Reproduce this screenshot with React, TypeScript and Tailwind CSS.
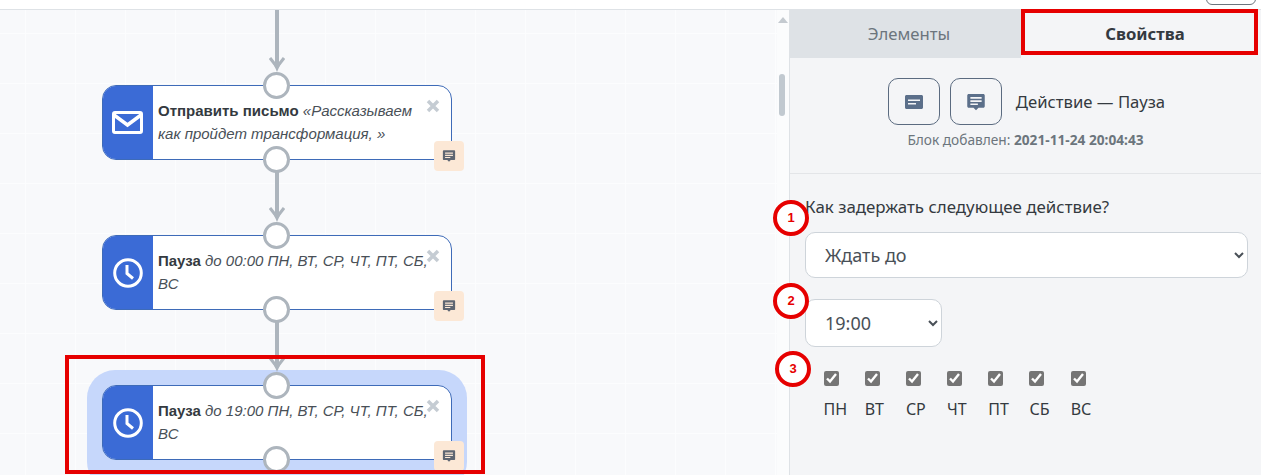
import React from "react";

const Msg = ({ className = "" }: { className?: string }) => (
  <svg viewBox="0 0 16 16" className={className} fill="currentColor">
    <path fillRule="evenodd" d="M2.2 1.500h11.600c.7 0 1.200.5 1.200 1.200v8.600c0 .7-.5 1.200-1.200 1.200H10l-2 2-2-2H2.200c-.7 0-1.200-.5-1.200-1.200V2.700c0-.7.5-1.200 1.200-1.200zM3.500 4v1.300h9V4zm0 2.600v1.300h9V6.600zm0 2.600v1.200h6V9.200z" />
  </svg>
);

const Card = ({ className = "" }: { className?: string }) => (
  <svg viewBox="0 0 18 14" className={className} fill="currentColor">
    <path fillRule="evenodd" d="M1.500 0h15c.8 0 1.500.7 1.500 1.500v11c0 .8-.7 1.500-1.500 1.500h-15C.7 14 0 13.300 0 12.500v-11C0 .7.7 0 1.500 0zM3 4.500V6h12V4.500zM3 8v1.500h8V8z" />
  </svg>
);

const Envelope = () => (
  <svg viewBox="0 0 31 23" className="w-[31px] h-[23px]">
    <rect x="1.500" y="1.500" width="28" height="20" rx="1.500" fill="none" stroke="#fff" strokeWidth="3" />
    <path d="M2 4l13.500 10L29 4" fill="none" stroke="#fff" strokeWidth="3.500" />
  </svg>
);

const Clock = () => (
  <svg viewBox="0 0 30 30" className="w-[30px] h-[30px]">
    <circle cx="15" cy="15" r="13.300" fill="none" stroke="#fff" strokeWidth="3" />
    <path d="M14 7v8.500l6 5" fill="none" stroke="#fff" strokeWidth="3" />
  </svg>
);

const Dot = ({ className }: { className: string }) => (
  <div className={`absolute w-[27px] h-[27px] rounded-full bg-white border-[3px] border-[#adb5bd] ${className}`} />
);

const Node = ({ pos, icon, title, rest }: { pos: string; icon: React.ReactNode; title: string; rest: string }) => (
  <div className={`absolute left-[102px] w-[350px] h-[75px] ${pos}`}>
    <div className="flex h-full rounded-[14px] border border-[#3e6bb8] bg-white overflow-hidden">
      <div className="w-[51px] -ml-px -my-px bg-[#3b6bd6] flex items-center justify-center shrink-0">{icon}</div>
      <div className="pl-[5px] pt-[13px] w-[283px] text-[15px] leading-[23px] text-[#495057] italic font-['Liberation_Sans',sans-serif]">
        <b className="not-italic font-bold text-[#343a40]">{title}</b> {rest}
      </div>
    </div>
    <Dot className="left-[161px] -top-[13px]" />
    <Dot className="left-[161px] top-[61px]" />
    <span className="absolute left-[324px] top-[14px] w-[14px] h-[14px]">
      <svg viewBox="0 0 14 14" className="w-[14px] h-[14px]">
        <path d="M2 2l10 10M12 2L2 12" stroke="#c5ccd3" strokeWidth="3.500" />
      </svg>
    </span>
    <div className="absolute left-[332px] top-[56px] w-[30px] h-[30px] rounded-[4px] bg-[#fce8d6] flex items-center justify-center text-[#5f6672]">
      <Msg className="w-[14px] h-[14px]" />
    </div>
  </div>
);

const Arrow = ({ pos, h }: { pos: string; h: string }) => (
  <div className={`absolute left-[267px] w-[19px] ${pos} ${h} flex flex-col items-center`}>
    <div className="w-[4px] flex-1 bg-[#adb5bd] -mb-[8px]" />
    <svg viewBox="0 0 16 15" className="w-[16px] h-[15px] shrink-0">
      <path d="M1 1l7 9 7-9" fill="none" stroke="#adb5bd" strokeWidth="3" />
      <path d="M4 6l4 9 4-9z" fill="#adb5bd" />
    </svg>
  </div>
);

const Badge = ({ pos, n }: { pos: string; n: string }) => (
  <div className={`absolute w-[36px] h-[36px] rounded-full bg-white border-[4px] border-[#e60000] flex items-center justify-center text-[13px] font-bold text-[#e60000] font-['Liberation_Sans',sans-serif] ${pos}`}>
    {n}
  </div>
);

const days = ["ПН", "ВТ", "СР", "ЧТ", "ПТ", "СБ", "ВС"];

export default function App() {
  return (
    <div className="relative w-[1261px] h-[475px] overflow-hidden bg-white font-['Noto_Sans',sans-serif]">
      <div className="h-[10px] border-b border-[#dee2e6] relative">
        <div className="absolute left-[1206px] -top-[12px] w-[50px] h-[17px] rounded-[6px] border border-[#6c757d]" />
      </div>
      <div className="flex h-[465px]">
        <div className="relative w-[777px] overflow-hidden bg-[#f8f9fb] bg-[linear-gradient(#fcfdfe_1px,transparent_1px),linear-gradient(90deg,#fcfdfe_1px,transparent_1px)] bg-[size:50px_50px] bg-[position:25px_23px]">
          <div className="absolute -top-[10px] left-0 w-[777px] h-[475px]">
            <Arrow pos="top-[10px]" h="h-[62px]" />
            <Arrow pos="top-[172px]" h="h-[50px]" />

            <div className="absolute left-[87px] top-[370px] w-[380px] h-[120px] rounded-[28px] bg-[#c6d7fb]" />
            <Arrow pos="top-[322px]" h="h-[50px]" />

            <Node pos="top-[85px]" icon={<Envelope />} title="Отправить письмо" rest="«Рассказываем как пройдет трансформация, »" />
            <Node pos="top-[235px]" icon={<Clock />} title="Пауза" rest="до 00:00 ПН, ВТ, СР, ЧТ, ПТ, СБ, ВС" />
            <Node pos="top-[385px]" icon={<Clock />} title="Пауза" rest="до 19:00 ПН, ВТ, СР, ЧТ, ПТ, СБ, ВС" />

            <div className="absolute left-[65px] top-[355px] w-[420px] h-[119px] border-[4px] border-[#e60000]" />
          </div>
        </div>

        <div className="relative w-[12px] bg-[#fbfcfd]">
          <div className="absolute left-[1px] top-[7px] w-0 h-0 border-x-[5px] border-x-transparent border-b-[6px] border-b-[#c4cad0]" />
          <div className="absolute left-[2px] top-[64px] w-[6px] h-[42px] rounded-[3px] bg-[#c1c9d0]" />
        </div>

        <div className="w-[472px] border-l border-[#dee2e6] bg-[#f4f5f7] relative">
          <div className="flex h-[48px] text-[16.700px]">
            <div className="w-[231px] bg-[#dee2e6] text-[#6c757d] flex items-center justify-center pl-[7px] pb-[1px]">Элементы</div>
            <div className="flex-1 text-[#343a40] font-bold flex items-center justify-center pl-[8px] pb-[1px]">Свойства</div>
          </div>
          <div className="h-[116px] border-b border-[#e3e5e8] flex flex-col items-center">
            <div className="flex items-center mt-[20px] pl-[2px]">
              <button className="w-[52px] h-[47px] rounded-[10px] border border-[#5b6b80] flex items-center justify-center text-[#5b6f8a]">
                <Card className="w-[18px] h-[14px]" />
              </button>
              <button className="w-[52px] h-[47px] ml-[10px] rounded-[10px] border border-[#5b6b80] flex items-center justify-center text-[#5b6f8a]">
                <Msg className="w-[20px] h-[20px]" />
              </button>
              <span className="ml-[14px] text-[16.700px] text-[#343a40]">Действие — Пауза</span>
            </div>
            <div className="mt-[5px] text-[13.700px] text-[#6c757d]">
              Блок добавлен: <b>2021-11-24 20:04:43</b>
            </div>
          </div>
          <div className="pl-[15px] pr-[13px] pt-[21px]">
            <label className="block text-[16.900px] leading-[24px] text-[#343a40]">Как задержать следующее действие?</label>
            <select className="block mt-[13px] w-full h-[46px] rounded-[10px] border border-[#ced4da] bg-white pl-[15px] text-[18px] text-[#495057]">
              <option>Ждать до</option>
            </select>
            <select className="block mt-[21px] w-[137px] h-[48px] rounded-[10px] border border-[#ced4da] bg-white pl-[15px] text-[18px] text-[#495057]">
              <option>19:00</option>
            </select>
            <div className="flex mt-[24px] pl-[18.500px]">
              {days.map((d) => (
                <div key={d} className="w-[41.200px] flex flex-col items-start">
                  <input type="checkbox" checked readOnly className="w-[15px] h-[15px] m-0 accent-[#757575]" />
                  <span className="mt-[12px] text-[16px] leading-[22px] text-[#343a40]">{d}</span>
                </div>
              ))}
            </div>
          </div>
        </div>
      </div>

      <div className="absolute left-[1021px] top-[9px] w-[237px] h-[46px] border-[4px] border-[#e60000]" />
      <Badge pos="left-[773px] top-[200px]" n="1" />
      <Badge pos="left-[773px] top-[283px]" n="2" />
      <Badge pos="left-[775px] top-[351px]" n="3" />
    </div>
  );
}
